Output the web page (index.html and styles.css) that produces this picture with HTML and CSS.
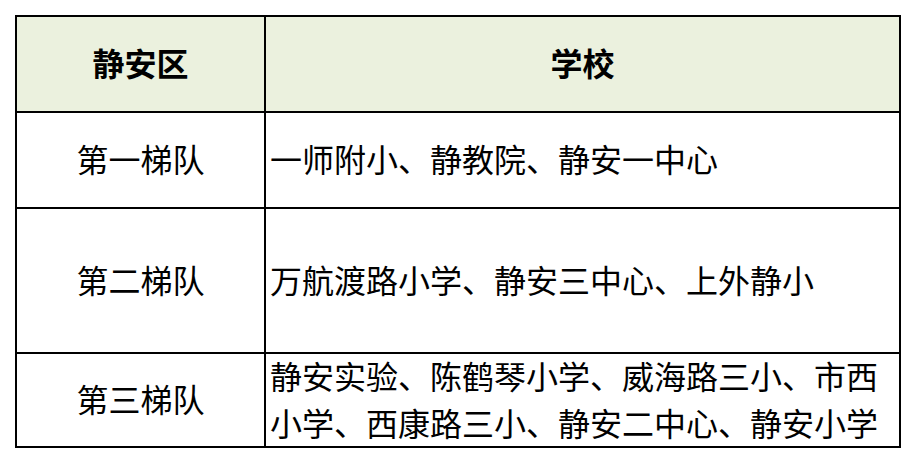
FILE: index.html
```html
<!DOCTYPE html>
<html lang="zh-CN">
<head>
<meta charset="utf-8">
<link rel="stylesheet" href="styles.css">
</head>
<body>
<div class="table">
  <div class="cell head c1">静安区</div>
  <div class="cell head c2">学校</div>
  <div class="cell c1 r1">第一梯队</div>
  <div class="cell c2 r1">一师附小、静教院、静安一中心</div>
  <div class="cell c1 r2">第二梯队</div>
  <div class="cell c2 r2">万航渡路小学、静安三中心、上外静小</div>
  <div class="cell c1 r3">第三梯队</div>
  <div class="cell c2 r3 multi"><span class="lines">静安实验、陈鹤琴小学、威海路三小、市西<br>小学、西康路三小、静安二中心、静安小学</span></div>
</div>
</body>
</html>
```

FILE: styles.css
```css
html, body {
  margin: 0;
  padding: 0;
  background: #ffffff;
}
body {
  padding: 15px 0 0 15px;
  font-family: "Noto Sans CJK SC", "Microsoft YaHei", sans-serif;
  color: #000;
}
.table {
  display: grid;
  grid-template-columns: 247px 633px;
  grid-template-rows: 94px 94px 143px 92px;
  gap: 2px;
  padding: 2px;
  background: #000;
  width: max-content;
}
.cell {
  background: #fff;
  font-size: 32px;
  line-height: 45px;
  display: flex;
  align-items: center;
  white-space: nowrap;
  padding-bottom: 3px;
  box-sizing: border-box;
}
.head {
  background: #EBF1DE;
  font-weight: bold;
  justify-content: center;
}
.c1 {
  justify-content: center;
}
.c2 {
  padding-left: 4px;
}
.head.c2 {
  padding-left: 0;
}
.multi {
  padding-bottom: 2px;
  overflow: visible;
}
.lines {
  line-height: 47px;
}
```
